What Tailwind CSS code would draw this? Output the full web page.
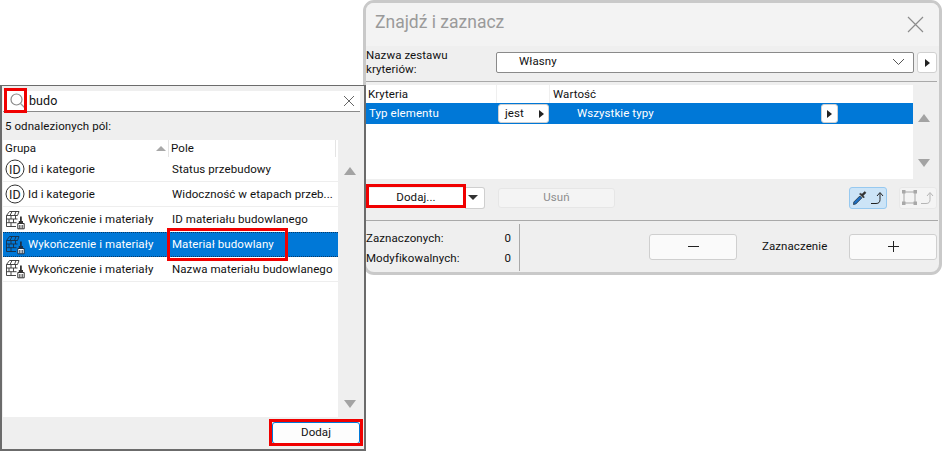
<!DOCTYPE html>
<html lang="pl">
<head>
<meta charset="utf-8">
<meta name="viewport" content="width=device-width, initial-scale=1.0">
<title>Znajdź i zaznacz</title>
<script src="https://cdn.jsdelivr.net/npm/@tailwindcss/browser@4"></script>
</head>
<body class="relative w-[942px] h-[451px] overflow-hidden bg-white text-[11.5px] tracking-[0.08px] leading-none text-[#111] font-['Roboto','Noto_Sans',sans-serif]">

<!-- shared icons -->
<svg class="hidden">
  <symbol id="id-icon" viewBox="0 0 20 20">
    <circle cx="10" cy="10" r="9" fill="none" stroke="#333" stroke-width="1"/>
    <text x="10" y="14.500" text-anchor="middle" font-size="12.500" font-family="Roboto" fill="#222">ID</text>
  </symbol>
  <symbol id="wall-icon" viewBox="0 0 20 20">
    <path d="M1.500 5.500 4.500 1.500h9.500l-1.500 4zM1.500 5.500v11h9.500M1.500 9h11M1.500 12.700h10M6 5.500V9M10.500 5.500V9M4 9v3.700M8.500 9v3.700M6 12.700v3.800M7 1.500l-2 4M11 1.500l-1.500 4" fill="none" stroke="currentColor" stroke-width=".9"/>
    <path d="M15 6.500h1.800v4.500H15zM13.800 11h4.200v2h-4.200z" fill="currentColor"/>
    <path d="M12.800 13.500h6.400v5.300h-6.400z" fill="#fff" stroke="currentColor" stroke-width="1"/>
    <path d="M14.500 15v3.500M16 15v3.500M17.500 15v3.500" stroke="currentColor" stroke-width=".7"/>
  </symbol>
</svg>

<!-- Find and select window -->
<section class="absolute left-[363px] top-0 w-[579px] h-[275px] flex flex-col rounded-[11px] border-[3px] border-[#c9c9c9] bg-[#efefef] overflow-hidden">
  <header class="h-[43px] shrink-0 flex items-center justify-between pl-[9px] pr-[15px] pb-[3px] bg-[#f3f3f3]">
    <h1 class="text-[17.500px] text-[#9a9a9a] tracking-normal">Znajdź i zaznacz</h1>
    <svg class="w-[17px] h-[17px] mt-[3px]" viewBox="0 0 17 17"><path d="M1 1l15 15M16 1L1 16" stroke="#8c8c8c" stroke-width="1.200" fill="none"/></svg>
  </header>

  <div class="h-[36px] shrink-0 flex items-start border-b border-[#a9a9a9] mr-[2px]">
    <p class="w-[130px] pt-[2px] leading-[14px]">Nazwa zestawu<br>kryteriów:</p>
    <div class="mt-[6px] w-[418px] h-[21px] flex items-center justify-between pl-[22px] pr-[8px] pb-px bg-white border border-[#8a8a8a] rounded-[2px]">
      <span>Własny</span>
      <svg class="w-[13px] h-[8px]" viewBox="0 0 13 8"><path d="M1 1l5.500 5.500L12 1" fill="none" stroke="#555"/></svg>
    </div>
    <div class="ml-[3px] mt-[6px] w-[20px] h-[21px] flex items-center justify-center bg-white border border-[#d0d0d0] rounded-[3px]">
      <span class="border-y-[4px] border-l-[5px] border-y-transparent border-l-[#222]"></span>
    </div>
  </div>

  <div class="h-[94px] shrink-0 mt-[3px] flex">
    <div class="w-[547px] bg-white">
      <div class="h-[18px] flex items-center">
        <span class="w-[131px] pl-[2px] pt-px h-full flex items-center border-r border-[#efefef]">Kryteria</span>
        <span class="w-[53px] h-full border-r border-[#efefef]"></span>
        <span class="pl-[3px] pt-px">Wartość</span>
      </div>
      <div class="h-[21px] flex items-center bg-[#0078d7] text-white">
        <span class="w-[132px] pl-[3px] pt-px">Typ elementu</span>
        <div class="w-[51px] h-[19px] flex items-center justify-between pl-[6px] pr-[4px] bg-white border border-[#d0d0d0] rounded-[3px] text-[#111]">
          <span>jest</span>
          <span class="border-y-[4px] border-l-[5px] border-y-transparent border-l-[#222]"></span>
        </div>
        <span class="ml-[28px] w-[244px] pt-px">Wszystkie typy</span>
        <div class="w-[17px] h-[19px] flex items-center justify-center bg-white border border-[#d0d0d0] rounded-[3px]">
          <span class="border-y-[4px] border-l-[5px] border-y-transparent border-l-[#222]"></span>
        </div>
      </div>
    </div>
    <div class="flex-1 flex flex-col items-center pr-[5px] pt-[29px] pb-[12px] justify-between">
      <span class="border-x-[6px] border-b-[8px] border-x-transparent border-b-[#a3a3a3]"></span>
      <span class="border-x-[6px] border-t-[8px] border-x-transparent border-t-[#a3a3a3]"></span>
    </div>
  </div>

  <div class="h-[42px] shrink-0 flex items-center border-b border-[#a9a9a9] mr-[1px] pb-[5px] pt-[1px]">
    <div class="ml-[1px] w-[98px] h-[20px] flex items-center justify-center bg-white">Dodaj...</div>
    <div class="w-[20px] h-[22px] flex items-center justify-center bg-white border border-[#cfcfcf] border-l-0 rounded-r-[3px]">
      <span class="mr-[3px] border-x-[5px] border-t-[5px] border-x-transparent border-t-[#333]"></span>
    </div>
    <div class="ml-[13px] w-[117px] h-[20px] flex items-center justify-center bg-[#f4f4f4] border border-[#e6e6e6] rounded-[3px] text-[#8e8e8e]">Usuń</div>
    <div class="ml-[234px] w-[38px] h-[22px] flex items-center justify-center gap-[3px] bg-[#cce4f7] border border-[#97c9f0] rounded-[3px]">
      <svg class="w-[15px] h-[16px]" viewBox="0 0 15 16"><path d="M1.500 14.500 1.800 12l6-6 2 2-6 6z" fill="#1d6fc4" stroke="#234" stroke-width=".8"/><path d="M7.500 4 11.500 8l.8-.8-1-1.700L14 2.800 12.700 1.500 10 4.200 8.300 3.200z" fill="#333" stroke="#333" stroke-width=".6"/></svg>
      <svg class="w-[15px] h-[14px]" viewBox="0 0 15 14"><path d="M1 12.500h5c3 0 4-1.500 4-4V2M7 5l3-3.500L13 5" fill="none" stroke="#222" stroke-width="1"/></svg>
    </div>
    <div class="ml-[12px] w-[38px] h-[22px] flex items-center justify-center gap-[3px] bg-[#f4f4f4] border border-[#e8e8e8] rounded-[3px]">
      <svg class="w-[15px] h-[15px]" viewBox="0 0 15 15"><path d="M2 2h11v11H2z" fill="none" stroke="#a8a8a8"/><path d="M0 0h3.500v3.500H0zM11.500 0H15v3.500h-3.500zM0 11.500h3.500V15H0zM11.500 11.500H15V15h-3.500z" fill="#a8a8a8"/></svg>
      <svg class="w-[15px] h-[14px]" viewBox="0 0 15 14"><path d="M1 12.500h5c3 0 4-1.500 4-4V2M7 5l3-3.500L13 5" fill="none" stroke="#b5b5b5" stroke-width="1"/></svg>
    </div>
  </div>

  <div class="flex-1 flex pt-[3px] pb-[1px]">
    <div class="w-[154px] pr-[8px] border-r border-[#a9a9a9] flex flex-col gap-[8px] pt-[9px]">
      <p class="h-[12px] flex justify-between"><span>Zaznaczonych:</span><span>0</span></p>
      <p class="h-[12px] flex justify-between"><span>Modyfikowalnych:</span><span>0</span></p>
    </div>
    <div class="flex-1 flex items-center pl-[129px] pb-[2px]">
      <div class="w-[88px] h-[26px] flex items-center justify-center bg-[#fafafa] border border-[#cfcfcf] rounded-[3px]">
        <span class="w-[11px] h-px bg-[#222]"></span>
      </div>
      <span class="ml-[25px] w-[87px]">Zaznaczenie</span>
      <div class="w-[88px] h-[26px] flex items-center justify-center bg-[#fafafa] border border-[#cfcfcf] rounded-[3px]">
        <svg class="w-[11px] h-[11px]" viewBox="0 0 11 11"><path d="M5.500 0v11M0 5.500h11" stroke="#222"/></svg>
      </div>
    </div>
  </div>
</section>

<!-- Field search window -->
<section class="absolute left-0 top-[85px] w-[366px] h-[366px] flex flex-col border-2 border-t border-[#6b6b6b] bg-[#efefef]">
  <div class="ml-[1px] mr-[4px] mt-[5px] h-[21px] shrink-0 flex items-center bg-white border-b border-[#8a8a8a]">
    <svg class="ml-[7px] w-[16px] h-[16px]" viewBox="0 0 16 16"><circle cx="6.500" cy="6.500" r="5.500" fill="none" stroke="#8a8a8a" stroke-width="1.200"/><path d="M10.500 10.500 15 15" stroke="#999" stroke-width="1.200"/></svg>
    <span class="ml-[3px] text-[12.500px]">budo</span>
    <svg class="ml-auto mr-[6px] w-[10px] h-[10px]" viewBox="0 0 10 10"><path d="M0 0l10 10M10 0 0 10" stroke="#666"/></svg>
  </div>
  <p class="h-[28px] shrink-0 ml-[3px] flex items-center pt-[2px]">5 odnalezionych pól:</p>
  <div class="flex-1 flex min-h-0 ml-[1px]">
    <div class="w-[335px] flex flex-col bg-white">
      <div class="h-[17px] shrink-0 flex items-center">
        <div class="w-[166px] h-full px-[2px] flex items-center justify-between border-r border-[#e4e4e4]">
          <span>Grupa</span>
          <span class="border-x-[5px] border-b-[5px] border-x-transparent border-b-[#a8a8a8]"></span>
        </div>
        <div class="w-[167px] h-full pl-[2px] flex items-center border-r border-[#e4e4e4]">Pole</div>
      </div>
      <div class="h-[25px] flex items-center border-b border-[#eeeeee]">
        <svg class="ml-[2px] w-[20px] h-[20px] shrink-0"><use href="#id-icon"/></svg>
        <span class="ml-[3px] pt-px w-[144px]">Id i kategorie</span><span class="pt-px">Status przebudowy</span>
      </div>
      <div class="h-[25px] flex items-center border-b border-[#eeeeee]">
        <svg class="ml-[2px] w-[20px] h-[20px] shrink-0"><use href="#id-icon"/></svg>
        <span class="ml-[3px] pt-px w-[144px]">Id i kategorie</span><span class="pt-px">Widoczność w etapach przeb...</span>
      </div>
      <div class="h-[25px] flex items-center">
        <svg class="ml-[2px] w-[20px] h-[20px] shrink-0 text-[#333]"><use href="#wall-icon"/></svg>
        <span class="ml-[3px] pt-px w-[144px]">Wykończenie i materiały</span><span class="pt-px">ID materiału budowlanego</span>
      </div>
      <div class="h-[25px] flex items-center bg-[#0078d7] text-white border-y border-dotted border-[#0a3a66]">
        <svg class="ml-[2px] w-[20px] h-[20px] shrink-0 text-[#1b2f45]"><use href="#wall-icon"/></svg>
        <span class="ml-[3px] pt-px w-[144px]">Wykończenie i materiały</span><span class="pt-px">Materiał budowlany</span>
      </div>
      <div class="h-[25px] flex items-center border-b border-[#eeeeee]">
        <svg class="ml-[2px] w-[20px] h-[20px] shrink-0 text-[#333]"><use href="#wall-icon"/></svg>
        <span class="ml-[3px] pt-px w-[144px]">Wykończenie i materiały</span><span class="pt-px whitespace-nowrap">Nazwa materiału budowlanego</span>
      </div>
    </div>
    <div class="w-[24px] pt-[27px] pb-[9px] flex flex-col items-center justify-between">
      <span class="border-x-[6px] border-b-[8px] border-x-transparent border-b-[#a3a3a3]"></span>
      <span class="border-x-[6px] border-t-[8px] border-x-transparent border-t-[#a3a3a3]"></span>
    </div>
  </div>
  <div class="h-[32px] shrink-0 flex items-center justify-end pr-[4px] ml-[1px]">
    <div class="w-[88px] h-[22px] flex items-center justify-center bg-[#fdfdfd] border border-[#0078d7] rounded-[3px]">Dodaj</div>
  </div>
</section>

<!-- red callouts -->
<div class="absolute left-[4px] top-[88px] w-[23px] h-[25px] border-[3px] border-[#f00000]"></div>
<div class="absolute left-[167px] top-[228px] w-[121px] h-[33px] border-[3px] border-[#f00000]"></div>
<div class="absolute left-[269px] top-[419px] w-[94px] h-[27px] border-[3px] border-[#f00000]"></div>
<div class="absolute left-[366px] top-[184px] w-[100px] h-[24px] border-[3px] border-[#f00000]"></div>
</body>
</html>
